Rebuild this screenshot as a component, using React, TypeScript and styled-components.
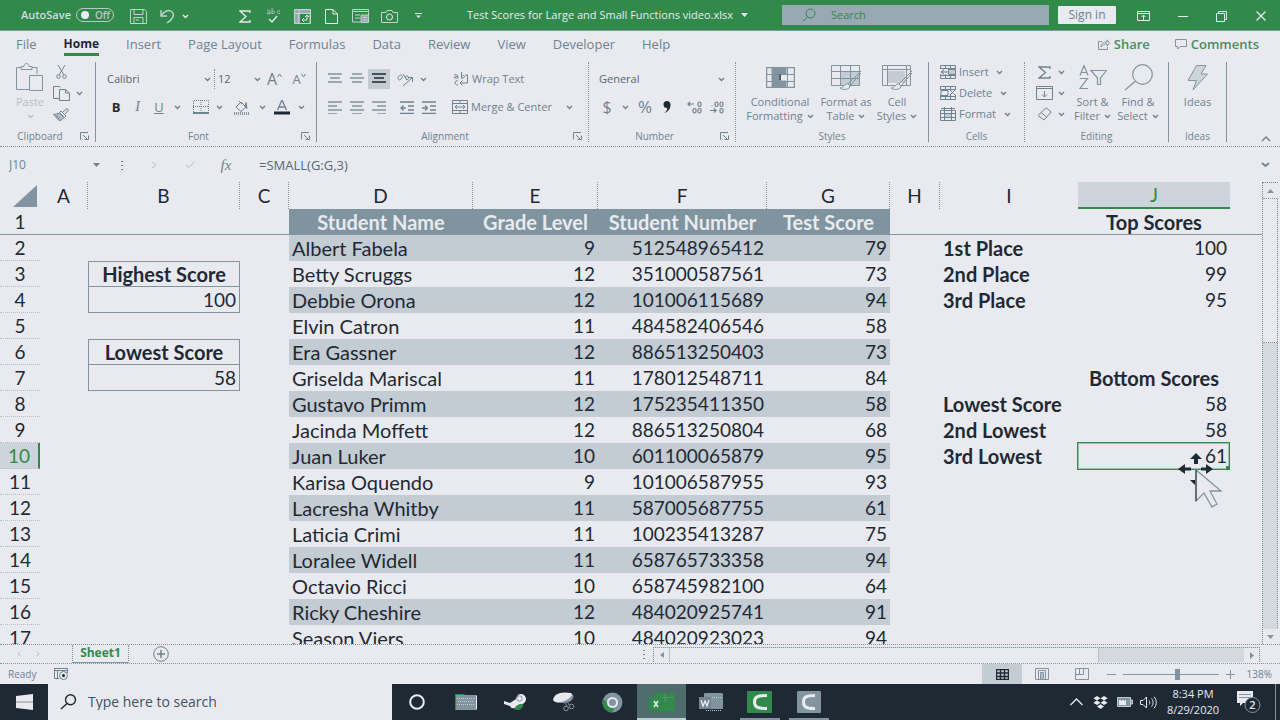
import React from "react";
import styled, { createGlobalStyle, css } from "styled-components";

const c = {
  light: "#e8eaf0",
  grey: "#8294a0",
  green: "#328a4a",
  dark: "#1f2933",
  band: "#c3cbd3",
  faint: "#b4bfc8",
  text: "#6f828f",
};

const Global = createGlobalStyle`
  * { box-sizing: border-box; }
  body { margin: 0; background: ${c.light}; color: ${c.text}; font: 12px/16px "Open Sans", "Noto Sans", sans-serif; }
  button, input, select { font: inherit; color: inherit; background: none; border: 0; padding: 0; margin: 0; border-radius: 0; outline: 0; }
  select { appearance: none; }
  svg { display: block; flex: none; }
`;

/* ---------- icons ---------- */

type IconProps = {
  w: number;
  h?: number;
  color?: string;
  sw?: number;
  children: React.ReactNode;
};
const Icon = ({ w, h = w, color = "currentColor", sw = 1, children }: IconProps) => (
  <svg width={w} height={h} viewBox={`0 0 ${w} ${h}`} fill="none" stroke={color} strokeWidth={sw} aria-hidden="true">
    {children}
  </svg>
);

const Chevron = () => (
  <Icon w={7} h={5} sw={1.4}>
    <path d="M1 1l2.500 2.500L6 1" />
  </Icon>
);
const Caret = ({ color = "currentColor" }: { color?: string }) => (
  <Icon w={7} h={4}>
    <path d="M0 0h7L3.500 4z" fill={color} stroke="none" />
  </Icon>
);
const Launcher = () => (
  <Icon w={9} h={8}>
    <path d="M.5 7.500v-7H8M3 3l4 4M8.500 3.500v4h-4" />
  </Icon>
);
const Sigma = ({ w, h, sw = 1.3 }: { w: number; h: number; sw?: number }) => (
  <Icon w={w} h={h} sw={sw}>
    <path d={`M${w - 1} 3V1H1l${w / 2} ${h / 2 - 1}L1 ${h - 1}h${w - 2}v-2`} />
  </Icon>
);
const Lines = ({ rows, dark }: { rows: [number, number][]; dark?: boolean }) => (
  <Icon w={14} h={13} sw={1.5} color={dark ? c.dark : c.grey}>
    {rows.map(([x, w], i) => (
      <path key={i} d={`M${x} ${1 + i * 4}h${w}`} />
    ))}
  </Icon>
);

/* ---------- title bar ---------- */

const Shell = styled.div`
  display: flex;
  flex-direction: column;
  height: 100vh;
  min-width: 1240px;
  overflow: hidden;
`;

const TitleBar = styled.header`
  display: flex;
  align-items: center;
  height: 31px;
  flex: none;
  padding-left: 21px;
  background: ${c.green};
  border-bottom: 1px solid ${c.grey};
  color: ${c.light};
`;

const AutoSave = styled.label`
  display: flex;
  align-items: center;
  gap: 5px;
  width: 103px;
  font-size: 11px;
  font-weight: 600;
  color: #d3dce0;
`;

const Toggle = styled.input`
  appearance: none;
  position: relative;
  width: 38px;
  height: 14px;
  border: 1px solid #b8c8c8;
  border-radius: 7px;
  &::before {
    content: "";
    position: absolute;
    left: 4px;
    top: 2px;
    width: 8px;
    height: 8px;
    border-radius: 50%;
    background: ${c.light};
  }
  &::after {
    content: "Off";
    position: absolute;
    left: 18px;
    top: 0;
    font-size: 10px;
    line-height: 12px;
    color: #b8c8c8;
  }
`;

const BarButton = styled.button<{ $w?: number }>`
  display: flex;
  align-items: center;
  justify-content: center;
  width: ${(p) => p.$w ?? 29}px;
  height: 30px;
  padding-top: 2px;
  flex: none;
`;

const QuickSet = styled.div`
  display: flex;
  margin-left: 41px;
`;

const FileName = styled.div`
  display: flex;
  flex: 1;
  align-items: center;
  justify-content: center;
  gap: 8px;
  font-size: 11px;
  white-space: nowrap;
`;

const SearchBox = styled.label`
  display: flex;
  align-items: center;
  gap: 15px;
  width: 267px;
  height: 20px;
  padding-left: 20px;
  background: #98a9b3;
  color: ${c.green};
`;

const SearchInput = styled.input`
  flex: 1;
  min-width: 0;
  font-size: 11px;
  &::placeholder {
    color: inherit;
    opacity: 1;
  }
`;

const SignIn = styled.button`
  width: 58px;
  height: 18px;
  margin: 0 8px 0 9px;
  background: ${c.light};
  color: ${c.text};
  border-radius: 1px;
`;

/* ---------- ribbon tabs ---------- */

const TabRow = styled.nav`
  display: flex;
  align-items: flex-end;
  height: 29px;
  flex: none;
  padding: 0 21px 4px 16px;
  gap: 27px;
  font-size: 13px;
  color: ${c.text};
`;

const Tab = styled.button<{ $active?: boolean }>`
  height: 21px;
  line-height: 18px;
  border-bottom: 3px solid transparent;
  white-space: nowrap;
  ${(p) =>
    p.$active &&
    css`
      font-size: 12px;
      font-weight: 700;
      color: ${c.dark};
      border-color: ${c.green};
    `}
`;

const TabActions = styled.div`
  display: flex;
  gap: 25px;
  height: 21px;
  line-height: 18px;
  margin-left: auto;
`;

const TabAction = styled.button`
  display: flex;
  align-items: center;
  gap: 4px;
  padding-bottom: 3px;
  font-size: 13px;
  font-weight: 600;
  color: #4b8a63;
  & svg {
    color: ${c.grey};
  }
`;

/* ---------- ribbon ---------- */

const Ribbon = styled.div`
  display: flex;
  height: 87px;
  flex: none;
  padding: 2px 0 4px;
  border-bottom: 1px dotted ${c.grey};
`;

const Group = styled.section<{ $w: number; $dotted?: boolean }>`
  display: flex;
  flex-direction: column;
  width: ${(p) => p.$w}px;
  flex: none;
  border-right: 1px ${(p) => (p.$dotted ? "dotted" : "solid")} ${c.grey};
`;

const GroupBody = styled.div<{ $pad?: string }>`
  display: flex;
  flex: 1;
  padding: ${(p) => p.$pad ?? "0"};
`;

const GroupFoot = styled.div`
  display: flex;
  align-items: center;
  height: 12px;
  font-size: 10px;
  line-height: 12px;
  text-align: center;
`;

const GroupName = styled.span`
  flex: 1;
`;

const GroupSettings = styled.button`
  width: 13px;
  margin-right: 2px;
`;

const Rows = styled.div<{ $gap?: number }>`
  display: flex;
  flex-direction: column;
  flex: 1;
  gap: ${(p) => p.$gap ?? 8}px;
`;

const ToolRow = styled.div`
  display: flex;
  align-items: center;
  height: 20px;
  white-space: nowrap;
`;

const Tool = styled.button<{ $w?: number; $on?: boolean; $dark?: boolean }>`
  display: flex;
  align-items: center;
  justify-content: center;
  width: ${(p) => p.$w ?? 22}px;
  height: 20px;
  flex: none;
  background: ${(p) => (p.$on ? c.band : "none")};
  color: ${(p) => (p.$dark ? c.dark : c.text)};
`;

const Spacer = styled.span<{ $w: number }>`
  width: ${(p) => p.$w}px;
`;

const Glyph = styled.span<{ $size?: number; $kind?: string }>`
  font-size: ${(p) => p.$size ?? 13}px;
  line-height: 16px;
  font-weight: ${(p) => (p.$kind === "bold" ? 700 : 400)};
  font-style: ${(p) => (p.$kind === "italic" ? "italic" : "normal")};
  font-family: ${(p) => (p.$kind === "italic" ? '"Liberation Serif", serif' : "inherit")};
  text-decoration: ${(p) => (p.$kind === "underline" ? "underline" : "none")};
`;

const LabelTool = styled.button`
  display: flex;
  align-items: center;
  gap: 3px;
  height: 20px;
  font-size: 11px;
  white-space: nowrap;
`;

const Picker = styled.select<{ $w: number }>`
  width: ${(p) => p.$w}px;
  height: 20px;
  font-size: 11px;
  color: #566874;
`;

const Divider = styled.span`
  height: 20px;
  margin: 0 3px;
  border-left: 1px dotted ${c.grey};
`;

const BigTool = styled.button<{ $w: number; $faint?: boolean }>`
  display: flex;
  flex-direction: column;
  align-items: center;
  width: ${(p) => p.$w}px;
  flex: none;
  font-size: 11px;
  line-height: 14px;
  color: ${(p) => (p.$faint ? c.faint : c.text)};
`;

const BigIcon = styled.span`
  display: flex;
  align-items: center;
  height: 31px;
  margin-bottom: 2px;
  color: ${c.grey};
`;

const WithChevron = styled.span`
  display: flex;
  align-items: center;
  justify-content: center;
  gap: 4px;
  min-height: 14px;
  white-space: nowrap;
`;

const Collapse = styled.button`
  display: flex;
  align-items: flex-end;
  margin-left: auto;
  padding: 0 9px 0 0;
`;

/* ---------- formula bar ---------- */

const FormulaBar = styled.div`
  display: flex;
  align-items: center;
  height: 35px;
  flex: none;
  padding: 0 10px 0 9px;
`;

const NameBox = styled.input`
  width: 84px;
`;

const FormulaInput = styled.input`
  flex: 1;
  min-width: 0;
  margin-left: 22px;
  font-size: 13px;
  color: #566874;
`;

const Fx = styled.span`
  font: italic 15px/18px "Liberation Serif", serif;
`;

/* ---------- worksheet ---------- */

const SheetArea = styled.main`
  display: flex;
  flex: 1;
  min-height: 0;
  border-bottom: 1px dotted ${c.grey};
`;

const GridPane = styled.div`
  flex: 1;
  min-width: 0;
  overflow: hidden;
`;

const Grid = styled.table`
  table-layout: fixed;
  width: 100%;
  border-collapse: separate;
  border-spacing: 0;
  font: 19px/24px Lato, "Open Sans", sans-serif;
  color: ${c.dark};
`;

const Col = styled.col<{ $w?: number }>`
  width: ${(p) => (p.$w ? `${p.$w}px` : "auto")};
`;

const Corner = styled.th`
  padding: 0 2px 0 13px;
`;

const ColHead = styled.th<{ $on?: boolean; $edge?: boolean }>`
  height: 27px;
  padding: 1px 0 0;
  font-weight: 400;
  border-right: 1px ${(p) => (p.$edge ? "dotted" : "none")} ${c.grey};
  ${(p) =>
    p.$on &&
    css`
      background: #cdd4db;
      color: ${c.green};
      border-bottom: 2px solid ${c.green};
    `}
`;

const RowHead = styled.th<{ $on?: boolean; $frozen?: boolean }>`
  height: 26px;
  padding: 0;
  font-weight: 400;
  border-bottom: 1px ${(p) => (p.$frozen ? "solid" : "dotted")} ${(p) => (p.$frozen ? c.grey : c.faint)};
  ${(p) =>
    p.$on &&
    css`
      background: #cdd4db;
      color: ${c.green};
      border-right: 2px solid ${c.green};
    `}
`;

type CellStyle = {
  $bold?: boolean;
  $text?: boolean;
  $align?: "left" | "right" | "center";
  $fill?: "band" | "head";
  $frozen?: boolean;
  $box?: "top" | "bottom";
};
const Cell = styled.td<CellStyle>`
  position: relative;
  height: 26px;
  padding: 0 3px;
  white-space: nowrap;
  text-align: ${(p) => p.$align ?? "left"};
  font-size: ${(p) => (p.$bold || p.$text ? 20 : 19)}px;
  font-weight: ${(p) => (p.$bold ? 700 : 400)};
  ${(p) => p.$frozen && `border-bottom: 1px solid ${c.grey};`}
  ${(p) => p.$fill === "band" && `background: ${c.band};`}
  ${(p) => p.$fill === "head" && `background: #7f949e; color: ${c.light};`}
  ${(p) => p.$box && `border: 1px solid ${c.grey};`}
  ${(p) => p.$box === "bottom" && "border-top: 0;"}
`;

const Selection = styled.span`
  position: absolute;
  inset: -1px 0 -1px -1px;
  border: 1px solid ${c.green};
  box-shadow: inset 0 0 0 1px #a5bcb5;
  &::after {
    content: "";
    position: absolute;
    right: -1px;
    bottom: -1px;
    width: 4px;
    height: 4px;
    background: ${c.green};
  }
`;

const Pointer = styled.span`
  position: absolute;
  left: 99px;
  top: 9px;
  z-index: 1;
`;

const VScroll = styled.div`
  display: flex;
  flex-direction: column;
  width: 16px;
  margin: 0 2px 0 0;
  background: #d3d9df;
  border: 1px dotted ${c.grey};
  border-bottom: 0;
`;

const ScrollButton = styled.button`
  display: flex;
  align-items: center;
  justify-content: center;
  width: 15px;
  height: 15px;
  flex: none;
  background: ${c.light};
  color: ${c.grey};
`;

const VThumb = styled.div`
  height: 145px;
  background: ${c.light};
  border: 1px dotted ${c.grey};
  border-width: 1px 0;
`;

const Fill = styled.div`
  flex: 1;
`;

/* ---------- sheet tabs, status ---------- */

const SheetTabs = styled.div`
  display: flex;
  align-items: center;
  height: 19px;
  flex: none;
  padding-right: 20px;
  border-bottom: 1px dotted ${c.grey};
`;

const TabNav = styled.div`
  display: flex;
  gap: 15px;
  width: 72px;
  padding-left: 17px;
  color: ${c.faint};
`;

const SheetTab = styled.button`
  width: 57px;
  height: 18px;
  line-height: 16px;
  margin-bottom: 1px;
  font-weight: 700;
  color: ${c.green};
  border: 1px dotted ${c.grey};
  border-top: 0;
  border-bottom: 1px solid ${c.grey};
`;

const AddSheet = styled.button`
  margin-left: 24px;
`;

const HScroll = styled.div`
  display: flex;
  width: 607px;
  height: 15px;
  margin-left: 8px;
  background: #d3d9df;
  border: 1px dotted ${c.grey};
  border-bottom: 0;
`;

const HThumb = styled.div`
  width: 430px;
  background: ${c.light};
  border: 1px solid ${c.faint};
  border-width: 0 1px;
`;

const StatusBar = styled.footer`
  display: flex;
  align-items: center;
  height: 20px;
  flex: none;
  padding: 0 8px;
  font-size: 10px;
`;

const Ready = styled.span`
  width: 46px;
`;

const ViewButton = styled.button<{ $on?: boolean }>`
  display: flex;
  align-items: center;
  justify-content: center;
  width: 40px;
  height: 20px;
  color: ${(p) => (p.$on ? c.dark : c.grey)};
  background: ${(p) => (p.$on ? c.band : "none")};
`;

const ZoomButton = styled.button`
  padding: 4px 5px;
  color: ${c.grey};
`;

const ZoomSlider = styled.input`
  appearance: none;
  width: 96px;
  height: 12px;
  margin: 0 2px;
  background: linear-gradient(${c.grey}, ${c.grey}) center / 100% 1px no-repeat;
  &::-webkit-slider-thumb {
    appearance: none;
    width: 5px;
    height: 11px;
    background: ${c.grey};
  }
`;

const ZoomValue = styled.output`
  width: 32px;
  text-align: right;
`;

/* ---------- task bar ---------- */

const TaskBar = styled.div`
  display: flex;
  height: 36px;
  flex: none;
  background: ${c.dark};
  color: ${c.light};
`;

const TaskButton = styled.button<{ $w?: number; $state?: "active" | "open" }>`
  display: flex;
  align-items: center;
  justify-content: center;
  width: ${(p) => p.$w ?? 49}px;
  flex: none;
  ${(p) => p.$state === "active" && `background: #4e6c6b; box-shadow: inset 0 -2px ${c.band};`}
  ${(p) =>
    p.$state === "open" &&
    `background: linear-gradient(${c.grey}, ${c.grey}) center bottom / 40px 2px no-repeat;`}
`;

const TaskSearch = styled.label`
  display: flex;
  align-items: center;
  gap: 11px;
  width: 344px;
  padding-left: 12px;
  background: ${c.light};
  color: #42525e;
`;

const TaskSearchInput = styled.input`
  flex: 1;
  min-width: 0;
  font-size: 14px;
  &::placeholder {
    color: inherit;
    opacity: 1;
  }
`;

const Tray = styled.div`
  display: flex;
  align-items: center;
  margin-left: auto;
  padding-right: 4px;
`;

const Clock = styled.time`
  width: 66px;
  text-align: center;
  font-size: 11px;
  line-height: 16px;
`;

const ShowDesktop = styled.button`
  height: 36px;
  width: 1px;
  margin-left: 5px;
  background: ${c.grey};
`;

/* ---------- data ---------- */

const students: [string, number, string, number][] = [
  ["Albert Fabela", 9, "512548965412", 79],
  ["Betty Scruggs", 12, "351000587561", 73],
  ["Debbie Orona", 12, "101006115689", 94],
  ["Elvin Catron", 11, "484582406546", 58],
  ["Era Gassner", 12, "886513250403", 73],
  ["Griselda Mariscal", 11, "178012548711", 84],
  ["Gustavo Primm", 12, "175235411350", 58],
  ["Jacinda Moffett", 12, "886513250804", 68],
  ["Juan Luker", 10, "601100065879", 95],
  ["Karisa Oquendo", 9, "101006587955", 93],
  ["Lacresha Whitby", 11, "587005687755", 61],
  ["Laticia Crimi", 11, "100235413287", 75],
  ["Loralee Widell", 11, "658765733358", 94],
  ["Octavio Ricci", 10, "658745982100", 64],
  ["Ricky Cheshire", 12, "484020925741", 91],
  ["Season Viers", 10, "484020923023", 94],
];

const columnB: Record<number, CellStyle & { text: string }> = {
  3: { text: "Highest Score", $bold: true, $align: "center", $box: "top" },
  4: { text: "100", $align: "right", $box: "bottom" },
  6: { text: "Lowest Score", $bold: true, $align: "center", $box: "top" },
  7: { text: "58", $align: "right", $box: "bottom" },
};

const columnI: Record<number, string> = {
  2: "1st Place",
  3: "2nd Place",
  4: "3rd Place",
  8: "Lowest Score",
  9: "2nd Lowest",
  10: "3rd Lowest",
};
const columnJ: Record<number, string> = { 2: "100", 3: "99", 4: "95", 7: "Bottom Scores", 8: "58", 9: "58", 10: "61" };

const columns: [string, number][] = [
  ["A", 48],
  ["B", 152],
  ["C", 49],
  ["D", 184],
  ["E", 125],
  ["F", 169],
  ["G", 123],
  ["H", 50],
  ["I", 138],
  ["J", 152],
];
const edged = "ABCDEFGH";

const tabNames = ["File", "Home", "Insert", "Page Layout", "Formulas", "Data", "Review", "View", "Developer", "Help"];

/* ---------- sections ---------- */

const Title = () => (
  <TitleBar>
    <AutoSave>
      AutoSave
      <Toggle type="checkbox" role="switch" />
    </AutoSave>
    <BarButton aria-label="Save">
      <Icon w={17} h={15} color="#c4d2d2">
        <path d="M.5.5h14l2 2v12H.5zM4 .5v5h9v-5M4 14.500v-6h9v6M6 11h3" />
      </Icon>
    </BarButton>
    <BarButton aria-label="Undo">
      <Icon w={16} h={15} sw={1.4} color="#c4d2d2">
        <path d="M1 1v6h6M1 7C4 2 9 0 12 3c3 3 1 7-5 11" />
      </Icon>
    </BarButton>
    <BarButton $w={7} aria-label="Undo list">
      <Chevron />
    </BarButton>
    <QuickSet>
      <BarButton aria-label="Sum">
        <Sigma w={12} h={13} />
      </BarButton>
      <BarButton aria-label="Spelling">
        <Icon w={15} h={16} color="#a9bdba">
          <path d="M1 2.500c2-1 3 0 3 1v2.500M4 4.500c-4-1-4 3 0 1M6 0v6M6 3.500c3-2 4 3 0 2M14 3c-3-1-4 3 0 2.500" />
          <path d="M3 11l3 3 5-6" stroke={c.light} strokeWidth="1.300" />
        </Icon>
      </BarButton>
      <BarButton aria-label="Pivot table">
        <Icon w={17} h={15} color="#c4d2d2">
          <path d="M.5.5h16v14H.5z" fill="#98a9b3" />
          <path d="M5 4.500h11v10H5z" fill={c.green} />
          <path d="M5 .5v14M.5 4.500h16" />
          <path d="M8 11h5V6M11 8l2-2 2 2M10 9l-2 2 2 2" stroke={c.light} />
        </Icon>
      </BarButton>
      <BarButton aria-label="New">
        <Icon w={13} h={15}>
          <path d="M.5.5H8l4.500 4.500v9.500H.5zM8 .5V5h4.500" />
        </Icon>
      </BarButton>
      <BarButton aria-label="Form">
        <Icon w={17} h={15} color="#c4d2d2">
          <path d="M.5.5h16v2H.5zM.5 3v10h8M16.500 3v4M3 6h5M3 9h5" />
          <path d="M9 6h7.500v7.500H9zM11 8.500h4M11 11h4" fill="#98a9b3" />
        </Icon>
      </BarButton>
      <BarButton aria-label="Camera">
        <Icon w={17} h={13} color="#c4d2d2">
          <path d="M.5 2.500H5L6 .5h5l1 2h4.500v10H.5z" />
          <circle cx="8.500" cy="7" r="3" stroke={c.light} />
        </Icon>
      </BarButton>
      <BarButton aria-label="Customize toolbar">
        <Icon w={7} h={6}>
          <path d="M0 .5h7" />
          <path d="M1 2.500h5L3.500 5z" fill={c.light} stroke="none" />
        </Icon>
      </BarButton>
    </QuickSet>
    <FileName>
      Test Scores for Large and Small Functions video.xlsx
      <Caret />
    </FileName>
    <SearchBox>
      <Icon w={14} h={14}>
        <circle cx="8.500" cy="5.500" r="4.500" />
        <path d="M5.500 9L1 13" />
      </Icon>
      <SearchInput placeholder="Search" aria-label="Search" />
    </SearchBox>
    <SignIn>Sign in</SignIn>
    <BarButton $w={39} aria-label="Ribbon display options">
      <Icon w={13} h={10}>
        <path d="M.5.5h12v9H.5zM.5 2.500h12M6.500 9V4.500M4.500 6l2-2 2 2" />
      </Icon>
    </BarButton>
    <BarButton $w={39} aria-label="Minimize">
      <Icon w={10} h={3}>
        <path d="M0 1.500h10" />
      </Icon>
    </BarButton>
    <BarButton $w={39} aria-label="Restore">
      <Icon w={11} h={11}>
        <path d="M.5 2.500h8v8h-8zM2.500 2.500v-2h8v8h-2" />
      </Icon>
    </BarButton>
    <BarButton $w={39} aria-label="Close">
      <Icon w={10} h={10} sw={1.2}>
        <path d="M.5.5l9 9M9.500.5l-9 9" />
      </Icon>
    </BarButton>
  </TitleBar>
);

const Tabs = () => (
  <TabRow>
    {tabNames.map((name) => (
      <Tab key={name} $active={name === "Home"}>
        {name}
      </Tab>
    ))}
    <TabActions>
      <TabAction>
        <Icon w={12} h={11}>
          <path d="M4 2.500H.5v8h9V8M3 8c0-4 3-5 6-5V.8L11.500 4 9 7V5C6 5 4 6 3 8z" />
        </Icon>
        Share
      </TabAction>
      <TabAction>
        <Icon w={12} h={11}>
          <path d="M.5.5h11v7H5L2.500 10V7.500h-2z" />
        </Icon>
        Comments
      </TabAction>
    </TabActions>
  </TabRow>
);

const Foot = ({ name, launcher }: { name: string; launcher?: boolean }) => (
  <GroupFoot>
    <GroupName>{name}</GroupName>
    {launcher && (
      <GroupSettings aria-label={`${name} settings`}>
        <Launcher />
      </GroupSettings>
    )}
  </GroupFoot>
);

const MiniGrid = ({ kind }: { kind: "insert" | "delete" | "format" }) => (
  <Icon w={16} h={14}>
    {kind === "format" && (
      <path d="M1 1.500h14M4.500 0v3M11.500 0v3M.5 3.500h15v10H.5zM.5 6.500h15M.5 10.500h15M4.500 3v10M11.500 3v10" />
    )}
    {kind !== "format" && (
      <path d="M.5 4V.5h15V4M.5 9v4.500h15V9M5.500 1v3M10.500 1v3M5.500 9v4M10.500 9v4M.5 3.500h15M.5 10.500h15" />
    )}
    {kind === "insert" && <path d="M1 7h7M4 4.500L1 7l3 2.500M8.500 4.500h7v5h-7z" fill={c.band} />}
    {kind === "delete" && <path d="M1 4.500h7v5H1zM10 4l5 5M15 4l-5 5" />}
    {kind === "format" && <path d="M5 7h6v3H5z" fill={c.band} stroke="none" />}
  </Icon>
);

const RibbonBar = () => (
  <Ribbon>
    <Group $w={96}>
      <GroupBody $pad="0 0 0 15px">
        <BigTool $w={30} $faint>
          <BigIcon>
            <Icon w={28} h={29}>
              <path d="M13 26.500H.5v-22H5M16 4.500h5V11M5 6.500V3.500h3c0-4 5-4 5 0h3v3z" />
              <path d="M13.500 12.500h13v15h-13z" />
            </Icon>
          </BigIcon>
          Paste
          <WithChevron>
            <Chevron />
          </WithChevron>
        </BigTool>
        <Rows $gap={1}>
          <ToolRow>
            <Tool $w={32} aria-label="Cut">
              <Icon w={11} h={14}>
                <path d="M2 0l6 10M9 0L3 10" />
                <circle cx="2.500" cy="11.500" r="1.800" />
                <circle cx="8.500" cy="11.500" r="1.800" />
              </Icon>
            </Tool>
          </ToolRow>
          <ToolRow>
            <Tool $w={32} aria-label="Copy">
              <Icon w={17} h={15}>
                <path d="M6 12.500H.5V.5h6l1 1" />
                <path d="M6.500 3.500h6L16.500 7v7.500h-10zM12.500 3.500V7h4" />
              </Icon>
            </Tool>
            <Tool $w={5} aria-label="Copy options">
              <Chevron />
            </Tool>
          </ToolRow>
          <ToolRow>
            <Tool $w={32} aria-label="Format painter">
              <Icon w={16} h={13}>
                <path
                  d="M6.500 5C5 6 3 6 .5 6.500L6 12.500c3 0 4-2 5-3z"
                  fill={c.faint}
                />
                <path d="M10 4l4-3.500 1.500 1.500L12 6M8 3l5 5-1.500 1.500-5-5zM3 9l2-1M5 11l2-2" />
              </Icon>
            </Tool>
          </ToolRow>
        </Rows>
      </GroupBody>
      <Foot name="Clipboard" launcher />
    </Group>

    <Group $w={221}>
      <GroupBody $pad="7px 0 0 11px">
        <Rows>
          <ToolRow>
            <Picker $w={97} aria-label="Font">
              <option>Calibri</option>
            </Picker>
            <Chevron />
            <Divider />
            <Picker $w={36} aria-label="Font size">
              <option>12</option>
            </Picker>
            <Chevron />
            <Tool $w={27} aria-label="Grow font">
              <Glyph $size={16}>A</Glyph>
              <Icon w={5} h={12}>
                <path d="M.5 4l2-3 2 3" />
              </Icon>
            </Tool>
            <Tool aria-label="Shrink font">
              <Glyph>A</Glyph>
              <Icon w={5} h={12}>
                <path d="M.5 1l2 3 2-3" />
              </Icon>
            </Tool>
          </ToolRow>
          <ToolRow>
            <Tool $w={18} $dark aria-label="Bold">
              <Glyph $kind="bold">B</Glyph>
            </Tool>
            <Tool $w={25} aria-label="Italic">
              <Glyph $kind="italic" $size={14}>
                I
              </Glyph>
            </Tool>
            <Tool $w={18} aria-label="Underline">
              <Glyph $kind="underline">U</Glyph>
            </Tool>
            <Tool $w={18} aria-label="Underline style">
              <Chevron />
            </Tool>
            <Tool $w={30} aria-label="Borders">
              <Icon w={16} h={14}>
                <path d="M.5 12V.5h15V12M8 0v13M0 6.500h16" strokeDasharray="1 1" />
                <path d="M0 13h16" strokeWidth="2" />
              </Icon>
            </Tool>
            <Tool $w={7} aria-label="Border style">
              <Chevron />
            </Tool>
            <Tool $w={36} aria-label="Fill color">
              <Icon w={15} h={15}>
                <path d="M2 7l5-5 5 5-5 4.500zM5 1l3 3" />
                <path d="M12 2.500l1 6-2-2z" fill={c.grey} />
                <path d="M0 13.500h15" strokeWidth="3" stroke={c.grey} strokeDasharray="1 1" />
              </Icon>
            </Tool>
            <Chevron />
            <Tool $w={32} aria-label="Font color">
              <Icon w={16} h={15}>
                <path d="M3.500 10L8 0l4.500 10M5 7h6" strokeWidth="1.300" />
                <path d="M0 13h16" strokeWidth="3" stroke={c.dark} />
              </Icon>
            </Tool>
            <Chevron />
          </ToolRow>
        </Rows>
      </GroupBody>
      <Foot name="Font" launcher />
    </Group>

    <Group $w={272} $dotted>
      <GroupBody $pad="7px 0 0 7px">
        <Rows>
          <ToolRow>
            <Tool aria-label="Top align">
              <Lines rows={[[0, 14], [2, 10], [0, 14]]} />
            </Tool>
            <Tool aria-label="Middle align">
              <Lines rows={[[2, 10], [0, 14], [2, 10]]} />
            </Tool>
            <Tool $on aria-label="Bottom align">
              <Lines dark rows={[[0, 14], [2, 10], [0, 14]]} />
            </Tool>
            <Tool $w={30} aria-label="Orientation">
              <Icon w={16} h={15}>
                <path d="M2 4c2-2 4 0 3 2L3 8C1 8 0 6 2 4M6 2l4 6c2-1 2-4 0-4s-2 2-1 3M6 14l9-8M11 5.500h4.500V10" />
              </Icon>
            </Tool>
            <Tool $w={7} aria-label="Orientation list">
              <Chevron />
            </Tool>
            <Spacer $w={26} />
            <LabelTool>
              <Icon w={16} h={15}>
                <path d="M1 3c3-1 4 0 4 3M5 4.500C0 4 0 7 5 6M8.500 0v6.500M8.500 4c4-2 4 3 0 2M5 9c-4-1-4 4 0 4M12 3h2.500v8H7M9.500 8.500L7 11l2.500 2.500" />
              </Icon>
              Wrap Text
            </LabelTool>
          </ToolRow>
          <ToolRow>
            <Tool aria-label="Align left">
              <Lines rows={[[0, 14], [0, 9], [0, 14], [0, 9]]} />
            </Tool>
            <Tool aria-label="Center">
              <Lines rows={[[0, 14], [2, 10], [0, 14], [2, 10]]} />
            </Tool>
            <Tool aria-label="Align right">
              <Lines rows={[[0, 14], [5, 9], [0, 14], [5, 9]]} />
            </Tool>
            <Tool $w={34} aria-label="Decrease indent">
              <Icon w={14} h={13} sw={1.3}>
                <path d="M0 1h14M8 5h6M8 9h6M0 12.500h14M1 7h5M3.500 4.500L1 7l2.500 2.500" />
              </Icon>
            </Tool>
            <Tool $w={10} aria-label="Increase indent">
              <Icon w={14} h={13} sw={1.3}>
                <path d="M0 1h14M8 5h6M8 9h6M0 12.500h14M0 7h5M3 4.500L5.500 7 3 9.500" />
              </Icon>
            </Tool>
            <Spacer $w={18} />
            <LabelTool>
              <Icon w={16} h={14}>
                <path d="M.5.5h15v13H.5zM.5 3.500h15M.5 10.500h15M8 0v3M8 11v3M3 7h10M5 5L3 7l2 2M11 5l2 2-2 2" />
              </Icon>
              Merge &amp; Center
            </LabelTool>
            <Tool $w={36} aria-label="Merge options">
              <Chevron />
            </Tool>
          </ToolRow>
        </Rows>
      </GroupBody>
      <Foot name="Alignment" launcher />
    </Group>

    <Group $w={147} $dotted>
      <GroupBody $pad="7px 0 0 10px">
        <Rows>
          <ToolRow>
            <Picker $w={119} aria-label="Number format">
              <option>General</option>
            </Picker>
            <Chevron />
          </ToolRow>
          <ToolRow>
            <Tool $w={16} aria-label="Currency">
              <Glyph $size={16}>$</Glyph>
            </Tool>
            <Tool $w={20} aria-label="Currency list">
              <Chevron />
            </Tool>
            <Tool $w={20} aria-label="Percent">
              <Glyph $size={17}>%</Glyph>
            </Tool>
            <Tool $w={24} $dark aria-label="Comma style">
              <Icon w={8} h={12}>
                <path
                  d="M4 0a3.500 3.500 0 0 1 3.500 4C7.500 8 5 10.500 1.500 12 4 9.500 4.500 8 4 7a3.500 3.500 0 0 1 0-7z"
                  fill={c.dark}
                  stroke="none"
                />
              </Icon>
            </Tool>
            <Tool $w={31} aria-label="Increase decimal">
              <Icon w={16} h={13} sw={1.2}>
                <path d="M1 3h6M3 1L1 3l2 2" />
                <rect x="11" y="1" width="3" height="4.500" rx="1.500" />
                <rect x="6" y="7.500" width="3" height="4.500" rx="1.500" />
                <rect x="11" y="7.500" width="3" height="4.500" rx="1.500" />
              </Icon>
            </Tool>
            <Tool $w={14} aria-label="Decrease decimal">
              <Icon w={16} h={13} sw={1.2}>
                <path d="M1 9.500h6M5 7.500l2 2-2 2M3 4.500v1" />
                <rect x="6" y="1" width="3" height="4.500" rx="1.500" />
                <rect x="11" y="1" width="3" height="4.500" rx="1.500" />
                <rect x="11" y="7.500" width="3" height="4.500" rx="1.500" />
              </Icon>
            </Tool>
          </ToolRow>
        </Rows>
      </GroupBody>
      <Foot name="Number" launcher />
    </Group>

    <Group $w={193}>
      <GroupBody $pad="0 0 0 8px">
        <BigTool $w={72}>
          <BigIcon>
            <Icon w={29} h={21}>
              <path d="M.5.5h28v20H.5z" strokeWidth="1.500" />
              <path d="M6 1h14v6h-6v7h6v6H6z" fill={c.grey} />
              <path d="M0 7.500h28M0 14.500h28M6.500 0v20M14.500 0v20M21.500 0v20" />
              <path d="M14 7v6" stroke={c.dark} />
            </Icon>
          </BigIcon>
          Conditional
          <WithChevron>
            Formatting <Chevron />
          </WithChevron>
        </BigTool>
        <BigTool $w={60}>
          <BigIcon>
            <Icon w={31} h={25}>
              <path d="M10 7h19v14H10z" fill={c.band} stroke="none" />
              <path d="M.5.5h28v20H.5zM0 6.500h29M0 13.500h29M9.500 0v20M19.500 0v20" />
              <path d="M30 6L17 19M30 8L19 21M17 19c-3-1-4 4-8 4 4 3 10 1 10-2z" fill={c.light} />
            </Icon>
          </BigIcon>
          Format as
          <WithChevron>
            Table <Chevron />
          </WithChevron>
        </BigTool>
        <BigTool $w={42}>
          <BigIcon>
            <Icon w={31} h={25}>
              <path d="M6 6h17v12H6z" fill={c.band} stroke="none" />
              <path d="M.5.5h28v20H.5zM0 4.500h29M5.500 0v20M24.500 0v20" />
              <path d="M30 6L17 19M30 8L19 21M17 19c-3-1-4 4-8 4 4 3 10 1 10-2z" fill={c.light} />
            </Icon>
          </BigIcon>
          Cell
          <WithChevron>
            Styles <Chevron />
          </WithChevron>
        </BigTool>
      </GroupBody>
      <Foot name="Styles" />
    </Group>

    <Group $w={96} $dotted>
      <GroupBody $pad="0 0 0 11px">
        <Rows $gap={1}>
          {(["insert", "delete", "format"] as const).map((kind) => (
            <ToolRow key={kind}>
              <LabelTool>
                <MiniGrid kind={kind} />
                {kind[0].toUpperCase() + kind.slice(1)}
              </LabelTool>
              <Tool aria-label={`${kind} options`}>
                <Chevron />
              </Tool>
            </ToolRow>
          ))}
        </Rows>
      </GroupBody>
      <Foot name="Cells" />
    </Group>

    <Group $w={144}>
      <GroupBody $pad="0 7px 0 8px">
        <Rows $gap={1}>
          <ToolRow>
            <Tool aria-label="AutoSum">
              <Sigma w={13} h={13} />
            </Tool>
            <Tool $w={12} aria-label="AutoSum list">
              <Chevron />
            </Tool>
          </ToolRow>
          <ToolRow>
            <Tool aria-label="Fill">
              <Icon w={17} h={14}>
                <path d="M.5.5h16v13H.5zM.5 2.500h16M8.500 5v6M6 8.500L8.500 11 11 8.500" />
              </Icon>
            </Tool>
            <Tool $w={12} aria-label="Fill list">
              <Chevron />
            </Tool>
          </ToolRow>
          <ToolRow>
            <Tool aria-label="Clear">
              <Icon w={15} h={14}>
                <path d="M9 .8l5.200 4.200-7.200 8L1 8.500zM4 5.500l5.500 4.500" />
              </Icon>
            </Tool>
            <Tool $w={12} aria-label="Clear list">
              <Chevron />
            </Tool>
          </ToolRow>
        </Rows>
        <BigTool $w={45}>
          <BigIcon>
            <Icon w={28} h={25} sw={1.2}>
              <path d="M1 10.500l4-10 4 10M2.500 7.500h5M1 13.500h7.500L1 23.500h8M12 5.500h15.500l-6 7.500v6.500h-3V13z" />
            </Icon>
          </BigIcon>
          Sort &amp;
          <WithChevron>
            Filter <Chevron />
          </WithChevron>
        </BigTool>
        <BigTool $w={46}>
          <BigIcon>
            <Icon w={29} h={27} sw={1.2}>
              <circle cx="18.500" cy="10.500" r="9.800" />
              <path d="M11 17.500L1 26" />
            </Icon>
          </BigIcon>
          Find &amp;
          <WithChevron>
            Select <Chevron />
          </WithChevron>
        </BigTool>
      </GroupBody>
      <Foot name="Editing" />
    </Group>

    <Group $w={58}>
      <GroupBody>
        <BigTool $w={57}>
          <BigIcon>
            <Icon w={22} h={26}>
              <path d="M9.500.5H19l-5 8.500h6.500L6 25l3.500-9.500H1z" fill="#cdd4db" />
            </Icon>
          </BigIcon>
          Ideas
        </BigTool>
      </GroupBody>
      <Foot name="Ideas" />
    </Group>
    <Collapse aria-label="Collapse ribbon">
      <Icon w={10} h={6} sw={1.4}>
        <path d="M1 5l4-4 4 4" />
      </Icon>
    </Collapse>
  </Ribbon>
);

const Formula = () => (
  <FormulaBar>
    <NameBox aria-label="Name box" defaultValue="J10" />
    <Caret />
    <Tool $w={43} aria-label="Resize">
      <Icon w={2} h={10}>
        <path d="M1 1v9" strokeDasharray="1 3" strokeWidth="2" />
      </Icon>
    </Tool>
    <Tool aria-label="Cancel">
      <Icon w={6} h={6} color={c.faint}>
        <path d="M1 0l4 3-4 3" />
      </Icon>
    </Tool>
    <Tool $w={50} aria-label="Enter">
      <Icon w={9} h={7} color={c.faint}>
        <path d="M0 4l3 2.500L8.500.5" />
      </Icon>
    </Tool>
    <Tool aria-label="Insert function">
      <Fx>fx</Fx>
    </Tool>
    <FormulaInput aria-label="Formula" defaultValue="=SMALL(G:G,3)" />
    <Icon w={9} h={6} sw={1.8}>
      <path d="M1 1l3.500 3L8 1" />
    </Icon>
  </FormulaBar>
);

const Sheet = () => (
  <SheetArea>
    <GridPane>
      <Grid>
        <colgroup>
          <Col $w={40} />
          {columns.map(([name, w]) => (
            <Col key={name} $w={w} />
          ))}
          <Col />
        </colgroup>
        <thead>
          <tr>
            <Corner aria-label="Select all">
              <Icon w={24} h={22}>
                <path d="M24 0v22H0z" fill={c.grey} stroke="none" />
              </Icon>
            </Corner>
            {columns.map(([name]) => (
              <ColHead key={name} scope="col" $on={name === "J"} $edge={edged.includes(name)}>
                {name}
              </ColHead>
            ))}
            <ColHead />
          </tr>
        </thead>
        <tbody>
          <tr>
            <RowHead scope="row" $frozen>
              1
            </RowHead>
            <Cell $frozen />
            <Cell $frozen />
            <Cell $frozen />
            {["Student Name", "Grade Level", "Student Number", "Test Score"].map((t) => (
              <Cell key={t} $frozen $bold $align="center" $fill="head">
                {t}
              </Cell>
            ))}
            <Cell $frozen />
            <Cell $frozen />
            <Cell $frozen $bold $align="center">
              Top Scores
            </Cell>
            <Cell $frozen />
          </tr>
          {students.map(([name, grade, id, score], i) => {
            const n = i + 2;
            const { text, ...boxed } = columnB[n] ?? { text: "" };
            const fill = i % 2 === 0 ? "band" : undefined;
            return (
              <tr key={name}>
                <RowHead scope="row" $on={n === 10}>
                  {n}
                </RowHead>
                <Cell />
                <Cell {...boxed}>{text}</Cell>
                <Cell />
                <Cell $fill={fill} $text>
                  {name}
                </Cell>
                <Cell $fill={fill} $align="right">
                  {grade}
                </Cell>
                <Cell $fill={fill} $align="right">
                  {id}
                </Cell>
                <Cell $fill={fill} $align="right">
                  {score}
                </Cell>
                <Cell />
                <Cell $bold>{columnI[n]}</Cell>
                <Cell $align={n === 7 ? "center" : "right"} $bold={n === 7}>
                  {columnJ[n]}
                  {n === 10 && (
                    <>
                      <Selection />
                      <Pointer>
                        <Icon w={46} h={56}>
                          <path
                            d="M19 1l6 6h-4v5h-4V7h-4zM1 17l7-5v3.500h6v3H8V22zM36 17l-7-5v3.500h-5v3h5V22zM13 28h5v5z"
                            fill={c.dark}
                            stroke="none"
                          />
                          <path
                            d="M19 18v31l8-8 8 14 5-3-7-13h11z"
                            fill={c.light}
                            stroke={c.grey}
                            strokeWidth="1.300"
                          />
                          <path d="M19 18v31" stroke={c.dark} />
                        </Icon>
                      </Pointer>
                    </>
                  )}
                </Cell>
                <Cell />
              </tr>
            );
          })}
        </tbody>
      </Grid>
    </GridPane>
    <VScroll>
      <ScrollButton aria-label="Scroll up">
        <Icon w={7} h={4}>
          <path d="M0 4h7L3.500 0z" fill={c.grey} stroke="none" />
        </Icon>
      </ScrollButton>
      <VThumb />
      <Fill />
      <ScrollButton aria-label="Scroll down">
        <Caret />
      </ScrollButton>
    </VScroll>
  </SheetArea>
);

const Bottom = () => (
  <>
    <SheetTabs>
      <TabNav>
        <Icon w={4} h={6}>
          <path d="M3.500.5L1 3l2.500 2.500" />
        </Icon>
        <Icon w={4} h={6}>
          <path d="M.5.5L3 3 .5 5.500" />
        </Icon>
      </TabNav>
      <SheetTab>Sheet1</SheetTab>
      <AddSheet aria-label="New sheet">
        <Icon w={16} h={16}>
          <circle cx="8" cy="8" r="7.300" />
          <path d="M4 8h8M8 4v8" strokeWidth="1.500" />
        </Icon>
      </AddSheet>
      <Fill />
      <Icon w={2} h={10}>
        <path d="M1 1v9" strokeDasharray="1 3" strokeWidth="2" />
      </Icon>
      <HScroll>
        <ScrollButton aria-label="Scroll left">
          <Icon w={4} h={6}>
            <path d="M4 0v6L0 3z" fill={c.grey} stroke="none" />
          </Icon>
        </ScrollButton>
        <HThumb />
        <Fill />
        <ScrollButton aria-label="Scroll right">
          <Icon w={4} h={7}>
            <path d="M0 0v7l4-3.500z" fill={c.grey} stroke="none" />
          </Icon>
        </ScrollButton>
      </HScroll>
    </SheetTabs>
    <StatusBar>
      <Ready>Ready</Ready>
      <button aria-label="Record macro">
        <Icon w={14} h={12}>
          <path d="M5 10.500H.5V.5h13V5M.5 2.500h13M3.500 3v7" />
          <circle cx="9.500" cy="7.500" r="4" fill={c.light} />
          <circle cx="9.500" cy="7.500" r="1.500" fill={c.dark} stroke="none" />
        </Icon>
      </button>
      <Fill />
      <ViewButton $on aria-label="Normal view">
        <Icon w={13} h={11} sw={1.4}>
          <path d="M.5.5h12v10H.5zM0 4h13M0 7.500h13M4.500 0v11M8.500 0v11" />
        </Icon>
      </ViewButton>
      <ViewButton aria-label="Page layout view">
        <Icon w={14} h={12}>
          <path d="M.5.5h13v11H.5zM3.500 2.500h7v9h-7z" />
          <path d="M5.500 4.500h3v7h-3z" fill={c.faint} />
        </Icon>
      </ViewButton>
      <ViewButton aria-label="Page break view">
        <Icon w={14} h={12}>
          <path d="M.5.5h13v11H.5zM.5 6.500h8v-6M4.500.5v6" />
        </Icon>
      </ViewButton>
      <ZoomButton aria-label="Zoom out">
        <Icon w={9} h={9}>
          <path d="M0 4.500h9" />
        </Icon>
      </ZoomButton>
      <ZoomSlider type="range" aria-label="Zoom" min={0} max={100} defaultValue={57} />
      <ZoomButton aria-label="Zoom in">
        <Icon w={9} h={9}>
          <path d="M0 4.500h9M4.500 0v9" />
        </Icon>
      </ZoomButton>
      <ZoomValue>138%</ZoomValue>
    </StatusBar>
  </>
);

const Tasks = () => (
  <TaskBar>
    <TaskButton $w={48} aria-label="Start">
      <Icon w={17} h={16}>
        <path d="M0 2l17-2v16L0 14z" fill={c.light} stroke="none" />
        <path d="M0 8h17" stroke={c.grey} />
      </Icon>
    </TaskButton>
    <TaskSearch>
      <Icon w={17} h={16} sw={1.4} color={c.dark}>
        <circle cx="10.500" cy="5.700" r="5" />
        <path d="M7 9.500L1 15" />
      </Icon>
      <TaskSearchInput placeholder="Type here to search" aria-label="Type here to search" />
    </TaskSearch>
    <TaskButton aria-label="Cortana">
      <Icon w={16} sw={2}>
        <circle cx="8" cy="8" r="6.800" />
      </Icon>
    </TaskButton>
    <TaskButton aria-label="File Explorer">
      <Icon w={22} h={16}>
        <path d="M0 0h8l2 1h12v15H0z" fill={c.grey} stroke="none" />
        <path d="M2 4.500h17M3 7.500h16M2 10.500h17" stroke={c.band} strokeDasharray="1 1" />
        <path d="M.5 16V.5H9" stroke={c.green} />
        <path d="M21.500 2v13" stroke={c.light} />
      </Icon>
    </TaskButton>
    <TaskButton aria-label="Steam">
      <Icon w={22} h={18}>
        <path d="M8 14c3 4 9 4 11-1v-3z" fill={c.green} stroke="none" />
        <path d="M0 8l6 2 6-4a5 5 0 1 1 4 5l-4 2c-1 3-5 3-6 0L0 11z" fill={c.light} stroke="none" />
        <circle cx="15.500" cy="5.500" r="2.700" stroke={c.grey} />
      </Icon>
    </TaskButton>
    <TaskButton aria-label="Snip">
      <Icon w={22} h={20}>
        <path d="M0 8C1 2 7-1 18 1c4 4-2 8-8 9-4 1-8 1-10-2z" fill={c.light} stroke="none" />
        <path d="M3 10c6 1 13-2 17-8 2 5-3 9-9 9-3 0-6 0-8-1z" fill={c.grey} stroke="none" />
        <path d="M11 10l3 4M14 9l2 4" stroke={c.grey} />
        <circle cx="13" cy="16.500" r="2.300" stroke={c.grey} />
        <circle cx="18.500" cy="14.500" r="2.300" stroke={c.grey} />
      </Icon>
    </TaskButton>
    <TaskButton aria-label="Chrome">
      <Icon w={23} h={21}>
        <circle cx="11.500" cy="10.500" r="10" fill={c.grey} stroke="none" />
        <path d="M2 7a10 10 0 0 0 9 13.500l4-7-6-1z" fill={c.green} stroke="none" />
        <circle cx="11.500" cy="10.500" r="4.500" fill={c.grey} stroke={c.light} strokeWidth="2" />
      </Icon>
    </TaskButton>
    <TaskButton $state="active" aria-label="Excel">
      <Icon w={26} h={18}>
        <rect x="6" y="0" width="20" height="18" rx="1" fill={c.green} stroke="none" />
        <path d="M8 4.500h17M16 1v8" stroke="#5b8f72" />
        <rect x="0" y="4" width="14" height="13" rx="1" fill={c.green} stroke="none" />
        <path d="M5 8l4 6M9 8l-4 6" stroke={c.light} strokeWidth="1.500" />
      </Icon>
    </TaskButton>
    <TaskButton aria-label="Word">
      <Icon w={24} h={18}>
        <rect x="5" y="0" width="19" height="16" rx="1" fill={c.grey} stroke="none" />
        <path d="M7 4.500h15M7 17.500h15" stroke={c.band} strokeDasharray="1 1" />
        <rect x="0" y="4" width="12" height="12" fill="#72848f" stroke="none" />
        <path d="M2 7l2 6 2-5 2 5 2-6" stroke={c.light} strokeWidth="1.300" />
      </Icon>
    </TaskButton>
    <TaskButton $state="open" aria-label="Camtasia">
      <Icon w={25} h={22}>
        <rect width="25" height="22" rx="1" fill={c.green} stroke="none" />
        <path d="M20 4.500C10 4.500 7.500 6 7.500 11s2.500 6.500 12.500 6.500" stroke={c.light} strokeWidth="3" />
      </Icon>
    </TaskButton>
    <TaskButton $state="open" aria-label="Camtasia Recorder">
      <Icon w={24} h={22}>
        <rect width="24" height="22" rx="1" fill={c.grey} stroke="none" />
        <path d="M18 4.500C9 4.500 6.500 6 6.500 11s2.500 6.500 11.500 6.500" stroke={c.light} strokeWidth="3" />
      </Icon>
    </TaskButton>
    <Tray>
      <TaskButton $w={24} aria-label="Hidden icons">
        <Icon w={13} h={8} sw={1.3}>
          <path d="M.5 7l6-6 6 6" />
        </Icon>
      </TaskButton>
      <TaskButton $w={24} aria-label="Dropbox">
        <Icon w={15} h={13}>
          <path
            d="M4 0l3.500 2.200L4 4.500.3 2.200zM11 0l3.700 2.200L11 4.500 7.500 2.200zM4 4.500l3.500 2.300L4 9 .3 6.800zM11 4.500l3.700 2.300L11 9 7.500 6.800zM7.500 8.300l3.500 2.200L7.500 13 4 10.500z"
            fill={c.light}
            stroke="none"
          />
        </Icon>
      </TaskButton>
      <TaskButton $w={25} aria-label="Battery">
        <Icon w={16} h={10}>
          <path d="M.5.5h13v9H.5zM14 3h1.500v4H14" stroke={c.band} fill={c.grey} />
          <path d="M2 3h2v1h1V3h2v1h1V3h1v5H2z" fill={c.light} stroke="none" />
        </Icon>
      </TaskButton>
      <TaskButton $w={23} aria-label="Volume">
        <Icon w={17} h={13}>
          <path d="M.5 4.500H3L6.500 1v11L3 8.500H.5zM9 4.500c1 1 1 3 0 4M11.500 2.500c2 2 2 6 0 8M14 .8c3 3 3 8 0 11.500" />
        </Icon>
      </TaskButton>
      <Clock>
        8:34 PM
        <br />
        8/29/2020
      </Clock>
      <TaskButton $w={44} aria-label="2 notifications">
        <Icon w={25} h={22}>
          <path d="M1 0h16v12H7l-3 3v-3H1z" fill={c.light} stroke="none" />
          <path d="M3 3.500h12M3 6.500h12" stroke={c.grey} />
          <circle cx="16.500" cy="14" r="7.500" fill={c.dark} stroke={c.grey} />
          <text x="16.500" y="18" textAnchor="middle" fontSize="11" fontWeight="600" fill={c.light} stroke="none">
            2
          </text>
        </Icon>
      </TaskButton>
      <ShowDesktop aria-label="Show desktop" />
    </Tray>
  </TaskBar>
);

export default function App() {
  return (
    <Shell>
      <Global />
      <Title />
      <Tabs />
      <RibbonBar />
      <Formula />
      <Sheet />
      <Bottom />
      <Tasks />
    </Shell>
  );
}
